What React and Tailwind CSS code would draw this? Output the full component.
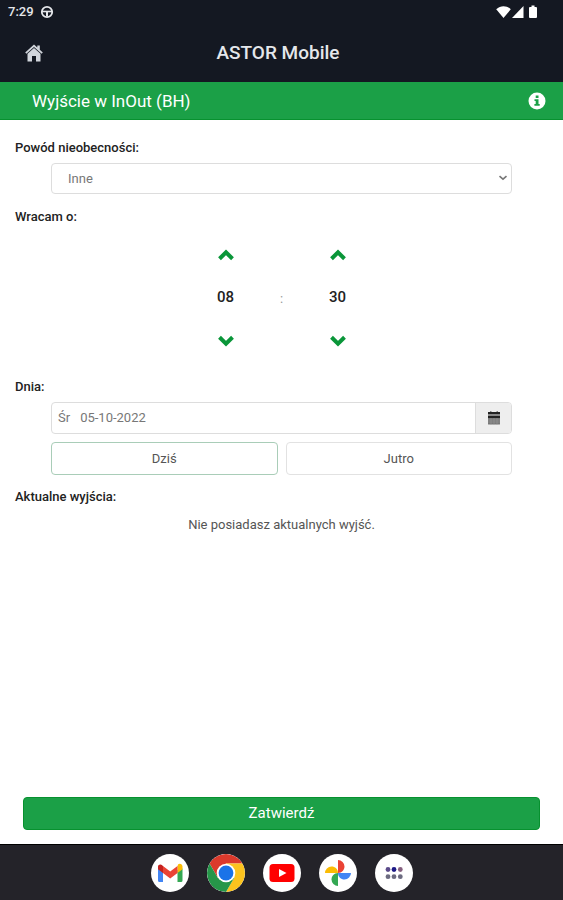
import { useState } from 'react';

const pad = (n) => String(n).padStart(2, '0');

const StatusBar = () => (
  <div className="flex h-6 items-center justify-between pl-2 pr-6 text-[13px] font-medium text-gray-200">
    <div className="flex items-center gap-1.5">
      <span>7:29</span>
      <svg viewBox="0 0 14 14" className="size-3.5" fill="none" stroke="currentColor">
        <circle cx="7" cy="7" r="5.2" strokeWidth="1.8" />
        <path d="M2 6.500h10" strokeWidth="1.600" />
        <path d="M7 6.500v5" strokeWidth="2" />
      </svg>
    </div>
    <svg viewBox="0 0 44 14" className="h-3.5 w-11 text-white" fill="currentColor">
      <path d="M8.500 13 1.200 4.200C3.400 2.200 6 1.200 8.500 1.200s5.200 1 7.300 3z" />
      <path d="M28.500 1v12H17z" />
      <path d="M36.500 .5h3V2h1.500a1 1 0 0 1 1 1v9a1 1 0 0 1-1 1h-6a1 1 0 0 1-1-1V3a1 1 0 0 1 1-1h1.500z" />
    </svg>
  </div>
);

const HomeIcon = () => (
  <svg viewBox="0 0 18 18" className="size-[18px]" fill="currentColor">
    <path d="M9 .5 12.300 3.500V1.500h2.500v4.300L17.800 8.600l-1.200 1.200L9 2.900 1.400 9.800.2 8.600z" />
    <path d="M9 3.900 15.500 9.800v7.700h-4.500V12H7v5.500H2.500V9.800z" />
  </svg>
);

const InfoIcon = () => (
  <svg viewBox="0 0 18 18" className="size-[18px]">
    <circle cx="9" cy="9" r="8.500" fill="#fff" />
    <path d="M7.700 3.500h2.800V6H7.700zM6.500 7.300h4v4.800h1.200v1.600H6.400v-1.600h1.300V8.900H6.500z" fill="#1ba047" />
  </svg>
);

const CalendarIcon = () => (
  <svg viewBox="0 0 14 14" className="size-3.5">
    <path d="M1 1h2V.5h1.500V1h5V.5H11V1h2v2.500H1zM1 4.500h12V7H1z" fill="#222" />
    <path d="M1 7h12v6a.5.5 0 0 1-.5.5h-11A.5.5 0 0 1 1 13z" fill="#777" />
    <path d="M1 9h12M1 11h12M4 7v6.500M7 7v6.500M10 7v6.500" stroke="#999" strokeWidth=".6" />
  </svg>
);

const Chevron = ({ down }) => (
  <svg viewBox="0 0 16 12" className={down ? 'h-3 w-4 rotate-180' : 'h-3 w-4'} fill="none">
    <path d="M1.500 9.700 8 3.400l6.500 6.300" stroke="#0a9639" strokeWidth="4" />
  </svg>
);

const TimeColumn = ({ label, value, onChange, max }) => (
  <div className="flex w-14 flex-col items-center">
    <button type="button" aria-label={`${label} +`} className="flex h-10 w-full items-center justify-center" onClick={() => onChange((value + 1) % max)}>
      <Chevron />
    </button>
    <input
      aria-label={label}
      value={pad(value)}
      onChange={(e) => onChange((parseInt(e.target.value, 10) || 0) % max)}
      className="h-11 w-full text-center text-[15px] font-medium text-[#222] outline-none"
    />
    <button type="button" aria-label={`${label} -`} className="flex h-11 w-full items-center justify-center" onClick={() => onChange((value + max - 1) % max)}>
      <Chevron down />
    </button>
  </div>
);

const GmailIcon = () => (
  <svg viewBox="0 0 38 38" className="size-full">
    <path d="M7 14.500v12a1.500 1.500 0 0 0 1.500 1.500H12V16z" fill="#4285f4" />
    <path d="M26.500 16v12H30a1.500 1.500 0 0 0 1.500-1.500v-12z" fill="#34a853" />
    <path d="M26.500 12.200V19l5-3.800v-2.500c0-2.600-2.800-3.700-4.500-2.300z" fill="#fbbc04" />
    <path d="M12 19v-7l7.200 5.400 7.300-5.400v7l-7.300 5.400z" fill="#ea4335" />
    <path d="M7 12.700v2.500l5 3.800v-7l-.6-.6C9.700 9.700 7 10.500 7 12.700z" fill="#c5221f" />
  </svg>
);

const ChromeIcon = () => (
  <svg viewBox="0 0 38 38" className="size-full">
    <path d="M2.550 9.500A19 19 0 0 1 35.450 9.500H19l-8.230 14.250z" fill="#db3a2c" />
    <path d="M35.450 9.500A19 19 0 0 1 19 38l8.230-14.250L19 9.500z" fill="#fcc31e" />
    <path d="M19 38A19 19 0 0 1 2.550 9.500l8.220 14.250h16.460z" fill="#269649" />
    <circle cx="19" cy="19" r="9.300" fill="#fff" />
    <circle cx="19" cy="19" r="7.400" fill="#1a73e8" />
  </svg>
);

const YoutubeIcon = () => (
  <svg viewBox="0 0 38 38" className="size-full">
    <rect x="6.500" y="10" width="25" height="18" rx="3.500" fill="#f00" />
    <path d="m16 15 7.500 4-7.500 4z" fill="#fff" />
  </svg>
);

const PhotosIcon = () => (
  <svg viewBox="0 0 38 38" className="size-full">
    <path d="M19 19V6a6.500 6.500 0 0 1 6.500 6.500c0 3-2.500 6.500-6.500 6.500z" fill="#ea4335" />
    <path d="M19 19h13a6.500 6.500 0 0 1-6.500 6.500C22 25.500 19 23 19 19z" fill="#4285f4" />
    <path d="M19 19v13a6.500 6.500 0 0 1-6.500-6.500C12.500 22 15 19 19 19z" fill="#34a853" />
    <path d="M19 19H6a6.500 6.500 0 0 1 6.500-6.500C16 12.500 19 15 19 19z" fill="#fbbc04" />
  </svg>
);

const AppsIcon = () => (
  <svg viewBox="0 0 38 38" className="size-full">
    <circle cx="13" cy="15.500" r="2.400" fill="#5b4b8a" />
    <circle cx="19" cy="15.500" r="2.400" fill="#1d1a86" />
    <circle cx="25.300" cy="15.500" r="2.400" fill="#86607f" />
    <circle cx="13" cy="22.700" r="2.400" fill="#6c6b80" />
    <circle cx="19" cy="22.700" r="2.400" fill="#6c6b80" />
    <circle cx="25.300" cy="22.700" r="2.400" fill="#6c6b80" />
  </svg>
);

const apps = [
  { name: 'Gmail', Icon: GmailIcon },
  { name: 'Chrome', Icon: ChromeIcon },
  { name: 'YouTube', Icon: YoutubeIcon },
  { name: 'Photos', Icon: PhotosIcon },
  { name: 'Apps', Icon: AppsIcon },
];

export default function App() {
  const [hours, setHours] = useState(8);
  const [minutes, setMinutes] = useState(30);
  const [date, setDate] = useState('05-10-2022');
  const [day, setDay] = useState('today');

  return (
    <div className="flex min-h-screen flex-col bg-white font-[Roboto,sans-serif] text-[13px] leading-5 text-[#555]">
      <header className="bg-[#141822]">
        <StatusBar />
        <div className="grid h-[58px] grid-cols-[1fr_auto_1fr] items-center pl-[25px] pr-8">
          <a href="#home" aria-label="Home" className="w-fit text-gray-300">
            <HomeIcon />
          </a>
          <h1 className="text-[19px] font-medium text-gray-200">ASTOR Mobile</h1>
        </div>
      </header>

      <div className="flex h-[38px] items-center justify-between border-b border-[#07912f] bg-[#1ba047] pl-8 pr-[17px] text-white">
        <h2 className="text-[17px]">Wyjście w InOut (BH)</h2>
        <button type="button" aria-label="Info">
          <InfoIcon />
        </button>
      </div>

      <form className="flex flex-1 flex-col" onSubmit={(e) => e.preventDefault()}>
        <div className="flex-1 px-[15px] pt-[18px]">
          <label htmlFor="reason" className="block font-medium text-[#222]">Powód nieobecności:</label>
          <div className="relative mx-9 mt-[5px]">
            <select id="reason" className="block h-[31px] w-full appearance-none rounded-sm border border-[#ddd] bg-white px-4 text-[#777] outline-none">
              <option>Inne</option>
            </select>
            <svg viewBox="0 0 10 6" className="pointer-events-none absolute right-1 top-3 h-1.5 w-2.5" fill="none">
              <path d="m1.500 1.200 3.500 3 3.500-3" stroke="#777" strokeWidth="1.600" />
            </svg>
          </div>

          <div className="mt-[13px] font-medium text-[#222]">Wracam o:</div>
          <div className="mt-2 flex items-center justify-center pb-3.5">
            <TimeColumn label="Godzina" value={hours} onChange={setHours} max={24} />
            <span className="w-14 text-center text-[#999]">:</span>
            <TimeColumn label="Minuta" value={minutes} onChange={setMinutes} max={60} />
          </div>

          <label htmlFor="date" className="block font-medium text-[#222]">Dnia:</label>
          <div className="mx-9 mt-[5px] flex h-8 overflow-hidden rounded-sm border border-[#ddd]">
            <span className="flex items-center pl-1.5 pr-2.5 text-[#777]">Śr</span>
            <input id="date" value={date} onChange={(e) => setDate(e.target.value)} className="min-w-0 flex-1 text-[#777] outline-none" />
            <button type="button" aria-label="Kalendarz" className="flex w-9 items-center justify-center border-l border-[#ddd] bg-[#eee]">
              <CalendarIcon />
            </button>
          </div>
          <div className="mx-9 mt-2 grid grid-cols-2 gap-2">
            <button
              type="button"
              onClick={() => setDay('today')}
              className={`h-[33px] rounded border ${day === 'today' ? 'border-[#a9cdb8]' : 'border-[#e2e2e2]'}`}
            >
              Dziś
            </button>
            <button
              type="button"
              onClick={() => setDay('tomorrow')}
              className={`h-[33px] rounded border ${day === 'tomorrow' ? 'border-[#a9cdb8]' : 'border-[#e2e2e2]'}`}
            >
              Jutro
            </button>
          </div>

          <h3 className="mt-3 font-medium text-[#222]">Aktualne wyjścia:</h3>
          <p className="mt-2 text-center">Nie posiadasz aktualnych wyjść.</p>
        </div>

        <div className="px-[23px] pb-3.5">
          <button type="submit" className="h-[33px] w-full rounded-sm border border-[#07912f] bg-[#1ba047] pb-0.5 text-[15px] text-white">
            Zatwierdź
          </button>
        </div>
      </form>

      <nav className="flex h-14 items-center justify-center gap-[18px] border-t border-black bg-[#242329]">
        {apps.map(({ name, Icon }) => (
          <a key={name} href={`#${name.toLowerCase()}`} aria-label={name} className="size-[38px] overflow-hidden rounded-full bg-white">
            <Icon />
          </a>
        ))}
      </nav>
    </div>
  );
}
